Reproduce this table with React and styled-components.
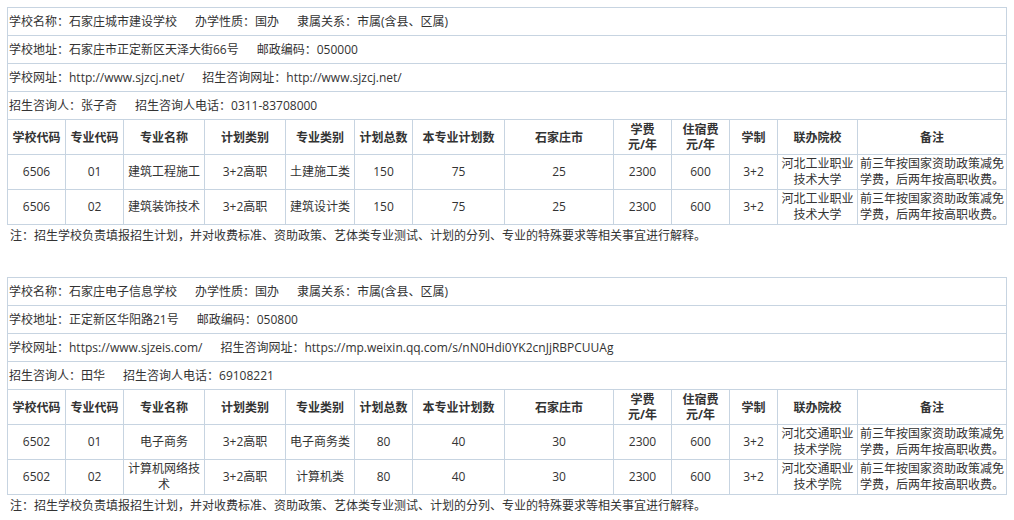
import React from 'react';
import styled, { createGlobalStyle } from 'styled-components';

const GlobalStyle = createGlobalStyle`
  html, body {
    margin: 0;
    padding: 0;
    background: #fff;
  }
  body {
    font-family: "Open Sans", "Noto Sans CJK SC", sans-serif;
    font-size: 12px;
    color: #333;
  }
`

const Page = styled.div`
  padding: 7px 0 0 7px;
`

const Block = styled.section`
  margin-bottom: 30px;
  &:last-child {
    margin-bottom: 0;
  }
`

const Table = styled.table`
  width: 1000px;
  border-collapse: collapse;
  table-layout: fixed;
`

const InfoCell = styled.td`
  border: 1px solid #c7d4e1;
  height: 27px;
  padding: 0 1px;
  text-align: left;
  line-height: 16px;
  white-space: nowrap;
`

const Field = styled.span`
  & + & {
    margin-left: 18px;
  }
`

const Head = styled.th`
  border: 1px solid #c7d4e1;
  height: 34px;
  padding: 0 1px;
  font-weight: bold;
  text-align: center;
  line-height: 15px;
`

const Cell = styled.td`
  border: 1px solid #c7d4e1;
  height: 34px;
  padding: 0 1px;
  text-align: center;
  line-height: 16px;
`

const Note = styled.p`
  margin: 0;
  padding-left: 3px;
  line-height: 22px;
`

const widths = [58, 58, 81, 81, 69, 58, 92, 109, 58, 58, 48, 80, 149];

const heads = [
  '学校代码', '专业代码', '专业名称', '计划类别', '专业类别', '计划总数', '本专业计划数',
  '石家庄市', <>学费<br />元/年</>, <>住宿费<br />元/年</>, '学制', '联办院校', '备注',
];

const remark = '前三年按国家资助政策减免学费，后两年按高职收费。';

const schools = [
  {
    info: [
      ['学校名称：石家庄城市建设学校', '办学性质：国办', '隶属关系：市属(含县、区属)'],
      ['学校地址：石家庄市正定新区天泽大街66号', '邮政编码：050000'],
      ['学校网址：http://www.sjzcj.net/', '招生咨询网址：http://www.sjzcj.net/'],
      ['招生咨询人：张子奇', '招生咨询人电话：0311-83708000'],
    ],
    rows: [
      ['6506', '01', '建筑工程施工', '3+2高职', '土建施工类', '150', '75', '25', '2300', '600', '3+2', '河北工业职业技术大学', remark],
      ['6506', '02', '建筑装饰技术', '3+2高职', '建筑设计类', '150', '75', '25', '2300', '600', '3+2', '河北工业职业技术大学', remark],
    ],
  },
  {
    info: [
      ['学校名称：石家庄电子信息学校', '办学性质：国办', '隶属关系：市属(含县、区属)'],
      ['学校地址：正定新区华阳路21号', '邮政编码：050800'],
      ['学校网址：https://www.sjzeis.com/', '招生咨询网址：https://mp.weixin.qq.com/s/nN0Hdi0YK2cnJjRBPCUUAg'],
      ['招生咨询人：田华', '招生咨询人电话：69108221'],
    ],
    rows: [
      ['6502', '01', '电子商务', '3+2高职', '电子商务类', '80', '40', '30', '2300', '600', '3+2', '河北交通职业技术学院', remark],
      ['6502', '02', '计算机网络技术', '3+2高职', '计算机类', '80', '40', '30', '2300', '600', '3+2', '河北交通职业技术学院', remark],
    ],
  },
];

function SchoolPlan({ school }) {
  return (
    <Block>
      <Table>
        <colgroup>
          {widths.map((w, i) => <col key={i} style={{ width: w }} />)}
        </colgroup>
        <tbody>
          {school.info.map((line, i) => (
            <tr key={'i' + i}>
              <InfoCell colSpan={13}>
                {line.map((f, j) => <Field key={j}>{f}</Field>)}
              </InfoCell>
            </tr>
          ))}
          <tr>
            {heads.map((h, i) => <Head key={i}>{h}</Head>)}
          </tr>
          {school.rows.map((row, i) => (
            <tr key={'r' + i}>
              {row.map((c, j) => <Cell key={j}>{c}</Cell>)}
            </tr>
          ))}
        </tbody>
      </Table>
      <Note>注：招生学校负责填报招生计划，并对收费标准、资助政策、艺体类专业测试、计划的分列、专业的特殊要求等相关事宜进行解释。</Note>
    </Block>
  );
}

export default function App() {
  return (
    <Page>
      <GlobalStyle />
      {schools.map((s, i) => <SchoolPlan key={i} school={s} />)}
    </Page>
  );
}
